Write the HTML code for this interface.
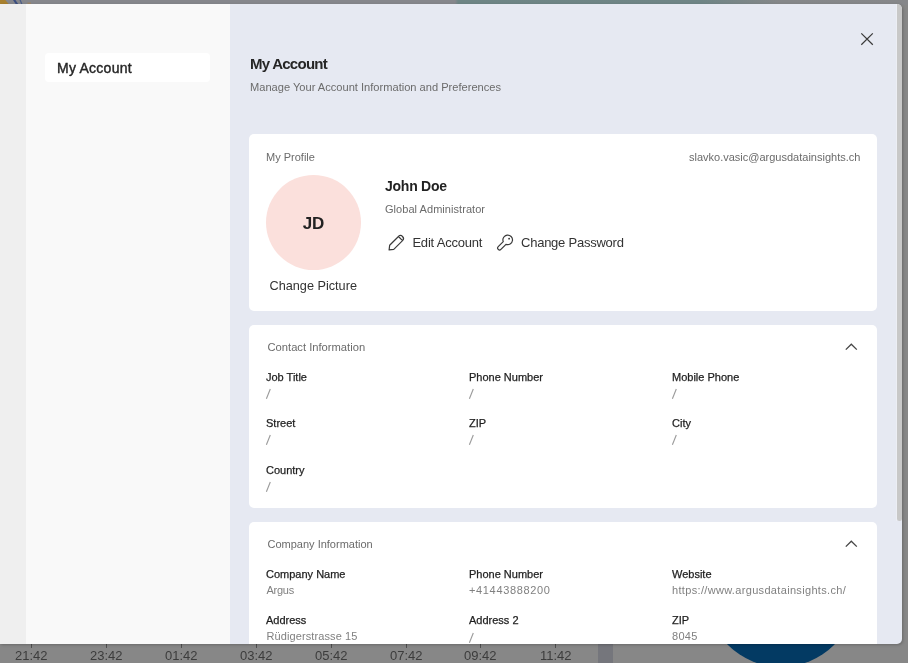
<!DOCTYPE html>
<html><head><meta charset="utf-8">
<style>
*{box-sizing:border-box;margin:0;padding:0}
html,body{width:908px;height:663px;overflow:hidden;background:#878787;font-family:"Liberation Sans",sans-serif;position:relative}
div,svg{position:absolute}
.t{line-height:1;white-space:nowrap}
.tl{top:649px;font-size:13px;color:#3c3c3c;line-height:1}
.tick{top:644px;width:1px;height:4px;background:#505050}
.card{left:249px;width:628px;background:#fff;border-radius:5px}
.h{font-size:11px;color:#6b6b6b}
.lbl{font-size:11px;color:#1f1f1f;-webkit-text-stroke:0.25px #1f1f1f}
.val{font-size:11px;color:#808080}
.sl{font-size:12px;color:#8a8a8a}
</style></head><body><div id="wrap" style="left:0;top:0;width:908px;height:663px;will-change:transform">
<!-- background top strip -->
<div style="left:0;top:0;width:908px;height:5px;background:linear-gradient(90deg,#86878c 0,#86878c 455px,#6e8585 458px,#6f8586 700px,#858789 780px,#86878a 908px)"></div>
<svg style="left:0;top:0" width="40" height="5" viewBox="0 0 40 5"><path d="M0 0 L5.3 0 L8.6 4 L0 4 Z" fill="#a8802e"/><path d="M13 0 L15.5 0 L18.5 4.5 L16 4.5 Z" fill="#3a4e80"/><path d="M19.5 0 L20.8 0 L22.6 4.5 L21.3 4.5 Z" fill="#4a5d88"/><rect x="27.5" y="2.5" width="3.5" height="1.8" fill="#a08460" opacity="0.8"/></svg>
<!-- bottom strip -->
<div style="left:598px;top:644px;width:15px;height:19px;background:#75767c"></div>
<div style="left:706px;top:517px;width:150px;height:150px;border-radius:50%;background:#033a63"></div>
<div class="tick" style="left:31px"></div>
<div class="tick" style="left:106px"></div>
<div class="tick" style="left:181px"></div>
<div class="tick" style="left:256px"></div>
<div class="tick" style="left:331px"></div>
<div class="tick" style="left:406px"></div>
<div class="tick" style="left:480px"></div>
<div class="tick" style="left:555px"></div>
<div class="tl" style="left:15px">21:42</div>
<div class="tl" style="left:90px">23:42</div>
<div class="tl" style="left:165px">01:42</div>
<div class="tl" style="left:240px">03:42</div>
<div class="tl" style="left:315px">05:42</div>
<div class="tl" style="left:390px">07:42</div>
<div class="tl" style="left:464px">09:42</div>
<div class="tl" style="left:540px">11:42</div>

<!-- modal -->
<div style="left:0;top:4px;width:902px;height:640px;border-radius:0 5px 5px 0;overflow:hidden;background:#e6e9f2;box-shadow:1px 1px 3px rgba(0,0,0,.22)">
  <div style="left:0;top:0;width:26px;height:640px;background:#efefef"></div>
  <div style="left:26px;top:0;width:204px;height:640px;background:#f9f9f9"></div>
  <div style="left:896px;top:0;width:1px;height:517px;background:#eceef4"></div><div style="left:897px;top:0;width:5px;height:517px;background:#c8c8c8;border-radius:0 0 2.5px 2.5px"></div>
</div>

<div style="left:45px;top:53px;width:165px;height:29px;background:#fff;border-radius:4px"></div>
<div class="t" style="left:57px;top:60.6px;font-size:14px;letter-spacing:0.25px;color:#262626;-webkit-text-stroke:0.4px #262626">My Account</div>

<svg style="left:855px;top:27px" width="24" height="24" viewBox="0 0 24 24"><path d="M6.3 6.4 L17.8 17.7 M17.8 6.4 L6.3 17.7" stroke="#3a3a3a" stroke-width="1.25" fill="none"/></svg>

<div class="t" style="left:250px;top:56.2px;font-size:15px;letter-spacing:-0.75px;font-weight:bold;color:#262626">My Account</div>
<div class="t" style="left:250px;top:81.7px;font-size:11.1px;color:#6b6b6b">Manage Your Account Information and Preferences</div>

<!-- profile card -->
<div class="card" style="top:134px;height:177px"></div>
<div class="t h" style="left:266px;top:152px">My Profile</div>
<div class="t h" style="left:689px;top:152px">slavko.vasic@argusdatainsights.ch</div>
<div style="left:266px;top:175px;width:95px;height:95px;border-radius:50%;background:#fbe0dc"></div>
<div class="t" style="left:266px;top:215px;width:95px;text-align:center;font-size:17px;font-weight:bold;color:#222">JD</div>
<div class="t" style="left:269.5px;top:279.8px;font-size:12.7px;color:#333">Change Picture</div>
<div class="t" style="left:385px;top:179px;font-size:14px;letter-spacing:-0.25px;font-weight:bold;color:#222">John Doe</div>
<div class="t" style="left:385px;top:203.8px;font-size:11px;letter-spacing:0.05px;color:#6b6b6b">Global Administrator</div>
<svg style="left:384px;top:230px" width="26" height="25" viewBox="0 0 26 25"><g transform="translate(5.1,19.9) rotate(-45)"><path d="M0 0 L3.7 -2.9 L16.1 -2.9 A2.9 2.9 0 0 1 16.1 2.9 L3.7 2.9 Z M16.1 -2.9 L16.1 2.9" stroke="#3a3a3a" stroke-width="1.2" fill="none" stroke-linejoin="round"/></g></svg>
<div class="t" style="left:412.4px;top:235.9px;font-size:13px;letter-spacing:-0.2px;color:#333">Edit Account</div>
<svg style="left:492px;top:230px" width="26" height="25" viewBox="0 0 26 25"><g transform="translate(15.7,9.9) rotate(135)"><path d="M4.4 1.9 L11.5 1.9 A1.9 1.9 0 0 0 11.5 -1.9 L4.4 -1.9 A4.8 4.8 0 1 0 4.4 1.9 Z" stroke="#3a3a3a" stroke-width="1.2" fill="none"/></g><circle cx="17.1" cy="8.7" r="0.9" fill="#333"/></svg>
<div class="t" style="left:521px;top:235.9px;font-size:13px;letter-spacing:-0.24px;color:#333">Change Password</div>

<!-- contact card -->
<div class="card" style="top:325px;height:183px"></div>
<div class="t h" style="left:267.5px;top:342.4px;font-size:11.2px">Contact Information</div>
<svg style="left:840px;top:336px" width="22" height="20" viewBox="0 0 22 20"><path d="M5.8 13.6 L11.3 8.2 L16.8 13.6" stroke="#454545" stroke-width="1.3" fill="none"/></svg>
<div class="t lbl" style="left:266px;top:372px">Job Title</div>
<svg class="sl2" style="left:264px;top:387px" width="9" height="14" viewBox="0 0 9 14"><line x1="2.4" y1="11.8" x2="6.3" y2="2.0" stroke="#999" stroke-width="1.1"/></svg>
<div class="t lbl" style="left:469px;top:372px">Phone Number</div>
<svg class="sl2" style="left:467px;top:387px" width="9" height="14" viewBox="0 0 9 14"><line x1="2.4" y1="11.8" x2="6.3" y2="2.0" stroke="#999" stroke-width="1.1"/></svg>
<div class="t lbl" style="left:672px;top:372px">Mobile Phone</div>
<svg class="sl2" style="left:670px;top:387px" width="9" height="14" viewBox="0 0 9 14"><line x1="2.4" y1="11.8" x2="6.3" y2="2.0" stroke="#999" stroke-width="1.1"/></svg>
<div class="t lbl" style="left:266px;top:418.2px">Street</div>
<svg class="sl2" style="left:264px;top:433.3px" width="9" height="14" viewBox="0 0 9 14"><line x1="2.4" y1="11.8" x2="6.3" y2="2.0" stroke="#999" stroke-width="1.1"/></svg>
<div class="t lbl" style="left:469px;top:418.2px">ZIP</div>
<svg class="sl2" style="left:467px;top:433.3px" width="9" height="14" viewBox="0 0 9 14"><line x1="2.4" y1="11.8" x2="6.3" y2="2.0" stroke="#999" stroke-width="1.1"/></svg>
<div class="t lbl" style="left:672px;top:418.2px">City</div>
<svg class="sl2" style="left:670px;top:433.3px" width="9" height="14" viewBox="0 0 9 14"><line x1="2.4" y1="11.8" x2="6.3" y2="2.0" stroke="#999" stroke-width="1.1"/></svg>
<div class="t lbl" style="left:266px;top:464.5px">Country</div>
<svg class="sl2" style="left:264px;top:479.6px" width="9" height="14" viewBox="0 0 9 14"><line x1="2.4" y1="11.8" x2="6.3" y2="2.0" stroke="#999" stroke-width="1.1"/></svg>

<!-- company card -->
<div style="left:249px;top:522px;width:628px;height:122px;background:#fff;border-radius:5px 5px 0 0"></div>
<div class="t h" style="left:267.5px;top:539.4px">Company Information</div>
<svg style="left:840px;top:533px" width="22" height="20" viewBox="0 0 22 20"><path d="M5.8 13.6 L11.3 8.2 L16.8 13.6" stroke="#454545" stroke-width="1.3" fill="none"/></svg>
<div class="t lbl" style="left:266px;top:568.7px">Company Name</div>
<div class="t val" style="left:266.5px;top:584.5px;letter-spacing:-0.25px">Argus</div>
<div class="t lbl" style="left:469px;top:568.7px">Phone Number</div>
<div class="t val" style="left:469px;top:584.5px;letter-spacing:0.65px">+41443888200</div>
<div class="t lbl" style="left:672px;top:568.7px">Website</div>
<div class="t val" style="left:672px;top:584.5px;letter-spacing:0.33px">https://www.argusdatainsights.ch/</div>
<div class="t lbl" style="left:266px;top:615.1px">Address</div>
<div class="t val" style="left:266.5px;top:630.8px;letter-spacing:0.1px">Rüdigerstrasse 15</div>
<div class="t lbl" style="left:469px;top:615.1px">Address 2</div>
<svg class="sl2" style="left:467px;top:630.5px" width="9" height="14" viewBox="0 0 9 14"><line x1="2.4" y1="11.8" x2="6.3" y2="2.0" stroke="#999" stroke-width="1.1"/></svg>
<div class="t lbl" style="left:672px;top:615.1px">ZIP</div>
<div class="t val" style="left:672px;top:630.8px;letter-spacing:0.3px">8045</div>
</div></body></html>
